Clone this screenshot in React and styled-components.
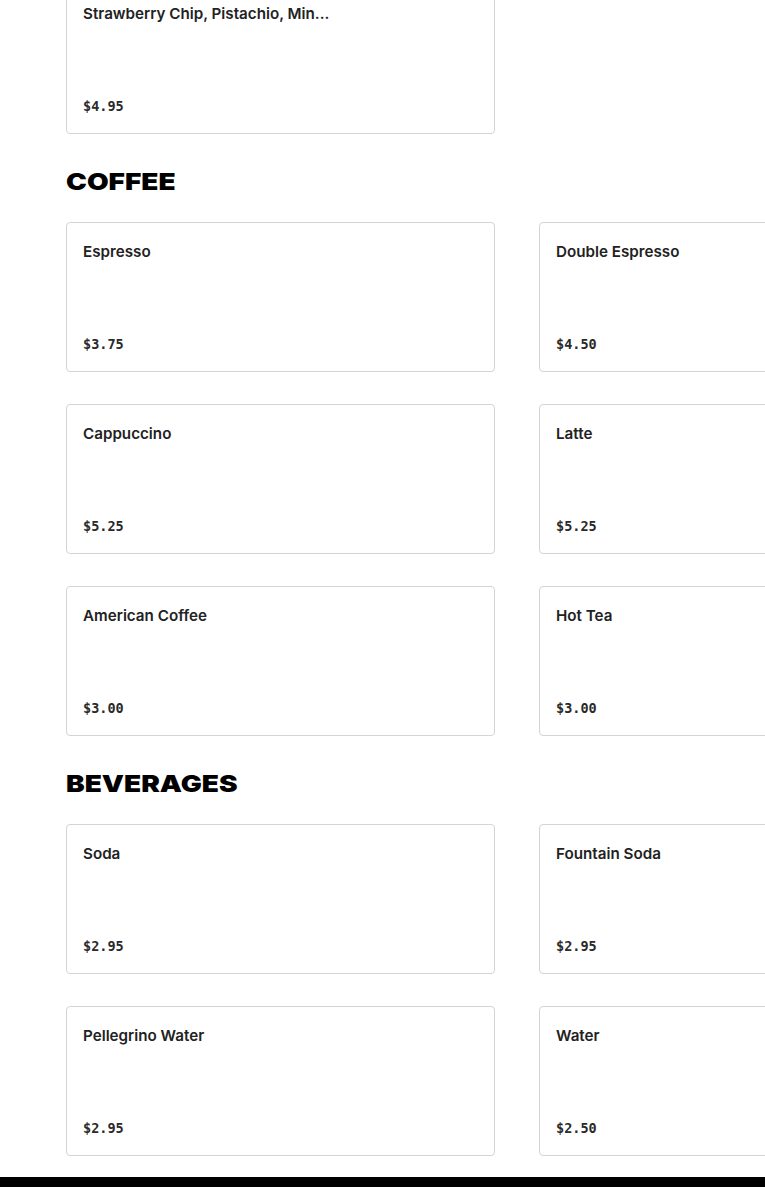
import React from "react";
import styled, { createGlobalStyle } from "styled-components";

const Global = createGlobalStyle`
  html, body { margin: 0; padding: 0; background: #fff; }
  body { overflow: hidden; font-family: Inter, "Noto Sans", sans-serif; }
  #root { width: 765px; overflow: hidden; }
`;

const Page = styled.main`
  margin-top: -16px;
  padding-left: 66px;
  width: 1000px;
`;

const Section = styled.section`
  padding-top: ${(p) => (p.$first ? "0" : "32px")};
`;

const Heading = styled.h2`
  margin: 0 0 24px;
  font-family: Inter, sans-serif;
  font-weight: 900;
  font-size: 23.5px;
  line-height: 32px;
  color: #000;
  transform: scaleX(1.19);
  transform-origin: left center;
`;

const Grid = styled.div`
  display: grid;
  grid-template-columns: 429px 429px;
  column-gap: 44px;
  row-gap: 32px;
`;

const Card = styled.div`
  box-sizing: border-box;
  height: 150px;
  border: 1px solid #d4d4d4;
  border-radius: 4px;
  padding: 18px 16px 17px;
  display: flex;
  flex-direction: column;
  justify-content: space-between;
  background: #fff;
`;

const Title = styled.div`
  font-family: Inter, sans-serif;
  font-weight: 600;
  font-size: 15.2px;
  line-height: 21px;
  color: #222;
  white-space: nowrap;
  overflow: hidden;
  text-overflow: ellipsis;
`;

const Price = styled.div`
  font-family: "DejaVu Sans Mono", "Liberation Mono", monospace;
  font-weight: 700;
  font-size: 13.5px;
  line-height: 20px;
  color: #2a2a2a;
`;

const Footer = styled.footer`
  margin-top: 21px;
  height: 40px;
  background: #000;
`;

const sections = [
  {
    title: "COFFEE",
    items: [
      ["Espresso", "$3.75"],
      ["Double Espresso", "$4.50"],
      ["Cappuccino", "$5.25"],
      ["Latte", "$5.25"],
      ["American Coffee", "$3.00"],
      ["Hot Tea", "$3.00"],
    ],
  },
  {
    title: "BEVERAGES",
    items: [
      ["Soda", "$2.95"],
      ["Fountain Soda", "$2.95"],
      ["Pellegrino Water", "$2.95"],
      ["Water", "$2.50"],
    ],
  },
];

export default function App() {
  return (
    <>
      <Global />
      <Page>
        <Section $first>
          <Grid>
            <Card>
              <Title>Strawberry Chip, Pistachio, Min...</Title>
              <Price>$4.95</Price>
            </Card>
          </Grid>
        </Section>
        {sections.map((s) => (
          <Section key={s.title}>
            <Heading>{s.title}</Heading>
            <Grid>
              {s.items.map(([name, price]) => (
                <Card key={name}>
                  <Title>{name}</Title>
                  <Price>{price}</Price>
                </Card>
              ))}
            </Grid>
          </Section>
        ))}
      </Page>
      <Footer />
    </>
  );
}
